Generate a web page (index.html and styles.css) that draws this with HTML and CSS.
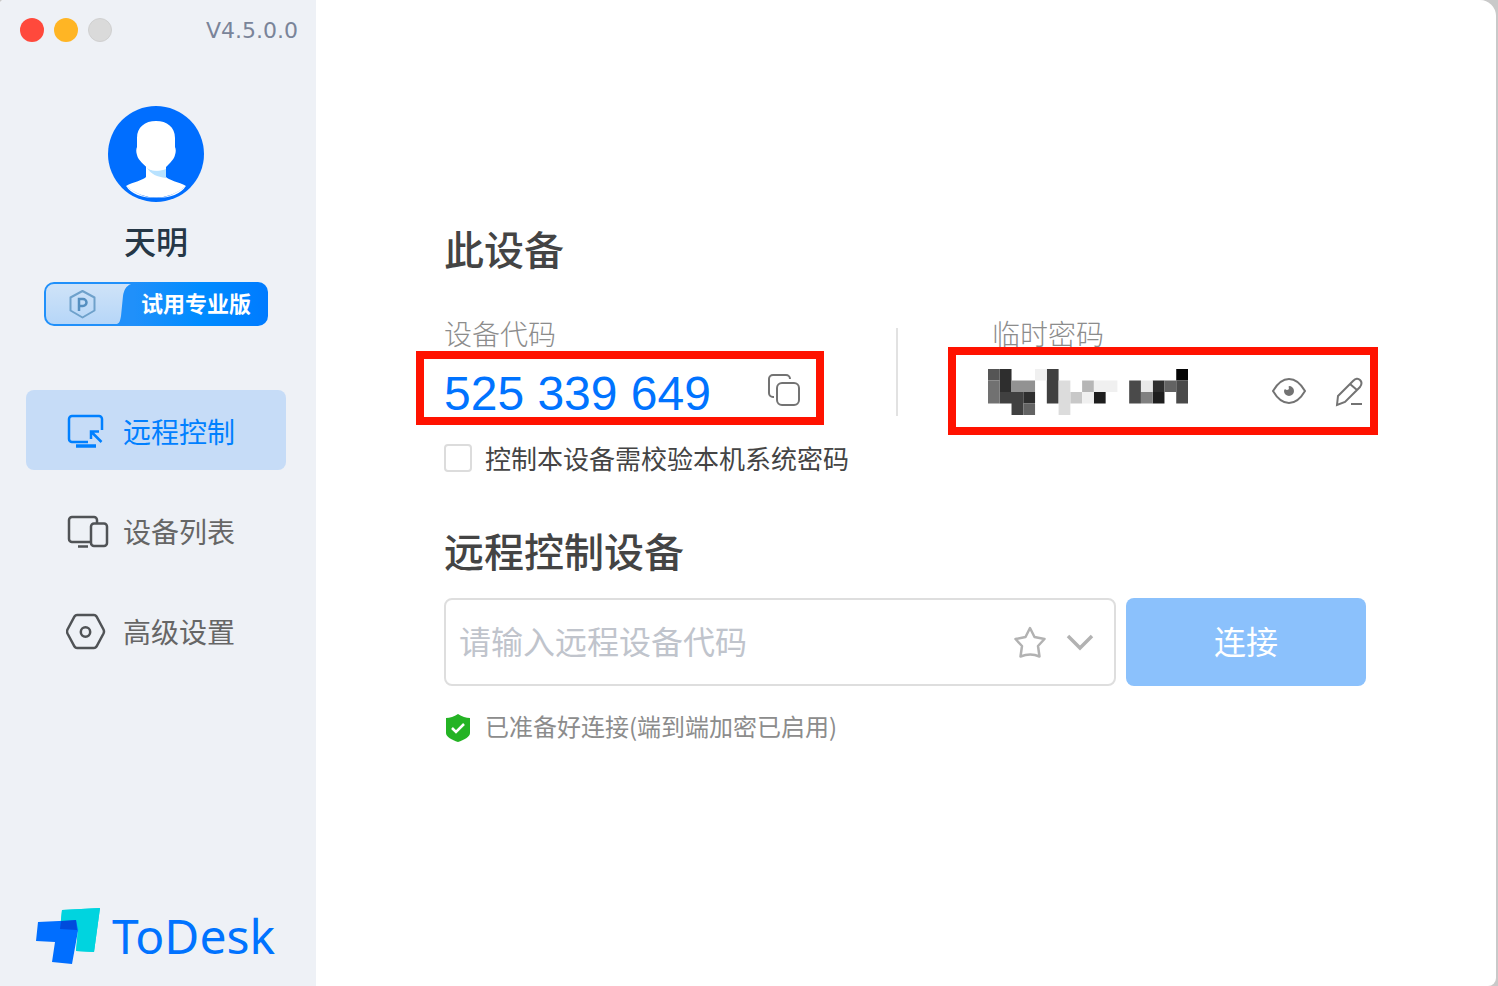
FILE: index.html
```html
<!DOCTYPE html>
<html lang="zh-CN">
<head>
    <meta charset="UTF-8">
    <meta name="viewport" content="width=device-width, initial-scale=1.0">
    <title>ToDesk</title>
    <link rel="stylesheet" href="styles.css">
</head>
<body>
    <div class="window">
        <aside class="sidebar">
            <div class="titlebar">
                <div class="lights">
                    <button class="light close" aria-label="关闭"></button>
                    <button class="light minimize" aria-label="最小化"></button>
                    <button class="light zoom" aria-label="缩放" disabled></button>
                </div>
                <span class="version">V4.5.0.0</span>
            </div>

            <div class="profile">
                <svg class="avatar" viewBox="0 0 96 96" aria-hidden="true">
                    <circle cx="48" cy="48" r="48" fill="#006eff"/>
                    <path d="M38 58h20v13c2 3 13 5 20 9a45 45 0 0 1-60 0c7-4 18-6 20-9z" fill="#fff"/>
                    <path d="M18 80q30 24 60 0-8 12-30 12t-30-12z" fill="#fff"/>
                    <path d="M39 62c6 4 14 3 19 1v9c-9-1-15-4-19-10z" fill="#b8e2ff"/>
                    <path d="M48 15c11 0 19 6 19 17v9c1 2 1 5 0 8-1 5-8 11-11 14-4 2-11 2-15 0-4-3-11-9-12-14-1-3-1-6 0-8v-9c0-11 8-17 19-17z" fill="#fff"/>
                </svg>
                <div class="username">天明</div>
                <button class="badge">
                    <span class="badge-icon">
                        <svg viewBox="0 0 82 44" aria-hidden="true">
                            <defs>
                                <linearGradient id="badgeFill" x1="0" y1="0" x2="0" y2="1">
                                    <stop offset="0" stop-color="#cfe3f8"/>
                                    <stop offset="1" stop-color="#b6d6f8"/>
                                </linearGradient>
                            </defs>
                            <path d="M10 2h77c-5 2-7 6-8 12l-2 20c-1 6-2 8-5 8H10a8 8 0 0 1-8-8V10a8 8 0 0 1 8-8z" fill="url(#badgeFill)"/>
                            <path d="M38.500 9l12 6.500v13l-12 7-12-7v-13z" fill="none" stroke="#6ea1cb" stroke-width="2" stroke-linejoin="round"/>
                            <path d="M35 29V17h4a3.500 3.500 0 0 1 0 7h-4" fill="none" stroke="#558fc0" stroke-width="2.500"/>
                        </svg>
                    </span>
                    <span class="badge-text">试用专业版</span>
                </button>
            </div>

            <nav class="nav">
                <a href="#" class="nav-item active">
                    <svg viewBox="0 0 44 40" aria-hidden="true">
                        <path d="M22 31H6a3 3 0 0 1-3-3V8a3 3 0 0 1 3-3h27a3 3 0 0 1 3 3v11M25 28V20.500h8M25.500 21l10 10"/>
                        <path d="M10 35h20" stroke-width="3.500"/>
                    </svg>
                    远程控制
                </a>
                <a href="#" class="nav-item">
                    <svg viewBox="0 0 44 40" aria-hidden="true">
                        <path d="M24 31H6a3 3 0 0 1-3-3V9a3 3 0 0 1 3-3h22a3 3 0 0 1 3 3v3M12 35.500h10"/>
                        <rect x="25" y="12.500" width="16" height="22.500" rx="3"/>
                    </svg>
                    设备列表
                </a>
                <a href="#" class="nav-item">
                    <svg viewBox="0 0 44 40" aria-hidden="true">
                        <path d="M11 4h17q1.500 0 2.500 1.500l7 13q1 2 0 4l-7 13q-1 1.500-2.500 1.500H11q-1.500 0-2.500-1.500l-7-13q-1-2 0-4l7-13q1-1.500 2.500-1.500z"/>
                        <circle cx="19.500" cy="21" r="4.700"/>
                    </svg>
                    高级设置
                </a>
            </nav>

            <div class="logo">
                <svg viewBox="0 0 64 56" aria-hidden="true">
                    <path d="M26 2L64 0l-6 44-18-1 2-21-18-1z" fill="#00d4df"/>
                    <path d="M2 14l42-2-8 44-20-2 3-20-19-1z" fill="#006eff"/>
                    <path d="M42 22L64 0l-6 44-18-1z" fill="#00d4df"/>
                    <path d="M26 2L64 0 42 22l-2-10-15 1z" fill="#00d4df"/>
                    <path d="M25 13l15-1 1 10-17-1z" fill="#004bdc"/>
                </svg>
                <span>ToDesk</span>
            </div>
        </aside>

        <main class="main">
            <h2>此设备</h2>
            <div class="device">
                <section class="field">
                    <div class="label">设备代码</div>
                    <div class="value code-value">
                        <span class="code">525 339 649</span>
                        <button class="icon-btn" aria-label="复制">
                            <svg viewBox="0 0 32 32" aria-hidden="true">
                                <path d="M6 23H5a4 4 0 0 1-4-4V5a4 4 0 0 1 4-4h13a4 4 0 0 1 4 4"/>
                                <rect x="9" y="9" width="22" height="22" rx="5"/>
                            </svg>
                        </button>
                        <span class="mark"></span>
                    </div>
                </section>
                <div class="divider"></div>
                <section class="field password">
                    <div class="label">临时密码</div>
                    <div class="value">
                        <svg class="mosaic" viewBox="0 0 17 4" preserveAspectRatio="none" aria-hidden="true">
                            <path fill="#050505" d="M16 0h1v1h-1z"/>
                            <path fill="#1e1e1e" d="M9 2h1v1H9zM14 2h1v1h-1z"/>
                            <path fill="#2e2e2e" d="M1 0h1v2H1zM3 2h1v1H3zM14 1h1v1h-1z"/>
                            <path fill="#404040" d="M5 0h1v3H5zM1 2h2v1H1zM2 3h1v1H2z"/>
                            <path fill="#4a4a4a" d="M12 1h1v2h-1zM16 1h1v2h-1z"/>
                            <path fill="#555" d="M0 0h1v1H0z"/>
                            <path fill="#636363" d="M3 3h1v1H3zM15 1h1v1h-1z"/>
                            <path fill="#717171" d="M0 1h1v2H0z"/>
                            <path fill="#808080" d="M13 2h1v1h-1z"/>
                            <path fill="#929292" d="M2 1h2v1H2z"/>
                            <path fill="#b6b6b6" d="M8 1h1v1H8z"/>
                            <path fill="#c8c8c8" d="M7 2h1v1H7z"/>
                            <path fill="#dcdcdc" d="M6 1h1v3H6z"/>
                            <path fill="#e8e8e8" d="M13 1h1v1h-1z"/>
                            <path fill="#f0f0f0" d="M4 0h1v1H4zM8 2h1v1H8zM9 1h2v1H9z"/>
                        </svg>
                        <div class="actions">
                            <button class="icon-btn" aria-label="显示密码">
                                <svg viewBox="0 0 32 32" aria-hidden="true">
                                    <path d="M-1 15Q6 3 15 3t16 12Q24 27 15 27T-1 15z"/>
                                    <path d="M15 10a5 5 0 1 1-5 5q0-1 1-2 1 1 2 1 2 0 2-2-1-1 0-2z" fill="#737373" stroke="none"/>
                                </svg>
                            </button>
                            <button class="icon-btn" aria-label="修改密码">
                                <svg viewBox="0 0 32 32" aria-hidden="true">
                                    <path d="M3 29l1-9L19 5q4-4 7-1t0 7L11 26zM16 8l7 6M17 28h11"/>
                                </svg>
                            </button>
                        </div>
                        <span class="mark"></span>
                    </div>
                </section>
            </div>

            <label class="check">
                <input type="checkbox">
                控制本设备需校验本机系统密码
            </label>

            <h2 class="remote-title">远程控制设备</h2>
            <form class="connect">
                <div class="input-box">
                    <input type="text" placeholder="请输入远程设备代码" aria-label="远程设备代码">
                    <button type="button" class="icon-btn" aria-label="收藏">
                        <svg viewBox="0 0 32 32" aria-hidden="true">
                            <path d="M16 2l4.500 9 10 2-6.500 7 1.500 10.500q-9-4-19 0L8 20l-6.500-7 10-2z" stroke-width="2.500" stroke-linejoin="round"/>
                        </svg>
                    </button>
                    <button type="button" class="icon-btn" aria-label="历史记录">
                        <svg viewBox="0 0 32 32" aria-hidden="true">
                            <path d="M4 10l12 12 12-12" stroke-width="3.500"/>
                        </svg>
                    </button>
                </div>
                <button type="button" class="connect-btn">连接</button>
            </form>

            <div class="status">
                <svg viewBox="0 0 28 28" aria-hidden="true">
                    <path d="M14 0q6 4 12 4v15c0 4-6 7-12 9-6-2-12-5-12-9V4q6 0 12-4z" fill="#24b324"/>
                    <path d="M8 14l4 4 8-8" fill="none" stroke="#fff" stroke-width="2.500"/>
                </svg>
                <span>已准备好连接(端到端加密已启用)</span>
            </div>
        </main>
    </div>
</body>
</html>
```
FILE: styles.css
```css
* {
    margin: 0;
    padding: 0;
    box-sizing: border-box;
}

body {
    font-family: "Noto Sans CJK SC", sans-serif;
    background: #c9c9c9;
    color: #444;
}

button {
    border: none;
    background: none;
    font-family: inherit;
    cursor: pointer;
}

svg {
    display: block;
    flex-shrink: 0;
}

.window {
    display: flex;
    min-height: 100vh;
    margin-right: 2px;
    background: #fff;
    border-radius: 4px 16px 8px 0;
    overflow: hidden;
}

/* Sidebar */
.sidebar {
    display: flex;
    flex-direction: column;
    flex: 0 0 316px;
    background: #eef1f6;
}

.titlebar {
    display: flex;
    align-items: center;
    justify-content: space-between;
    height: 60px;
    padding: 0 18px 0 20px;
}

.lights {
    display: flex;
    gap: 10px;
}

.light {
    width: 24px;
    height: 24px;
    border-radius: 50%;
}

.close {
    background: #ff493c;
}

.minimize {
    background: #ffb524;
}

.zoom {
    background: #dadada;
    border: 1px solid #d0d0d0;
}

.version {
    font-family: "DejaVu Sans", sans-serif;
    font-size: 22px;
    color: #7a8499;
}

.profile {
    display: flex;
    flex-direction: column;
    align-items: center;
    padding: 46px 4px 0 0;
}

.avatar {
    width: 96px;
    height: 96px;
}

.username {
    margin-top: 16px;
    padding-bottom: 4px;
    font-size: 32px;
    font-weight: 500;
    line-height: 44px;
    color: #253746;
}

.badge {
    display: flex;
    align-items: center;
    width: 224px;
    height: 44px;
    margin-top: 16px;
    border-radius: 10px;
    background: linear-gradient(90deg, #2090fa 40%, #008cff 70%, #007bff);
    overflow: hidden;
}

.badge-icon svg {
    width: 82px;
    height: 44px;
    overflow: visible;
}

.badge-text {
    padding: 0 0 4px 15px;
    font-size: 22px;
    font-weight: 700;
    color: #fff;
}

.nav {
    display: flex;
    flex-direction: column;
    gap: 20px;
    padding: 64px 30px 0 26px;
}

.nav-item {
    display: flex;
    align-items: center;
    gap: 13px;
    height: 80px;
    padding: 2px 0 0 40px;
    border-radius: 8px;
    font-size: 28px;
    color: #666;
    text-decoration: none;
}

.nav-item svg {
    width: 44px;
    height: 40px;
    fill: none;
    stroke: #505356;
    stroke-width: 2.5;
}

.nav-item.active {
    background: #c6dcf7;
    color: #0080ff;
}

.nav-item.active svg {
    stroke: #0080ff;
}

.logo {
    display: flex;
    align-items: center;
    gap: 12px;
    margin-top: auto;
    padding: 0 0 22px 36px;
    font-family: "Noto Sans", sans-serif;
    font-size: 48px;
    line-height: 56px;
    color: #0073ff;
}

.logo svg {
    width: 64px;
    height: 56px;
}

/* Main panel */
.main {
    display: flex;
    flex-direction: column;
    justify-content: center;
    flex: 1;
    min-width: 0;
    padding: 0 130px 16px 128px;
}

h2 {
    padding-bottom: 4px;
    font-size: 40px;
    font-weight: 500;
    line-height: 44px;
}

.device {
    display: grid;
    grid-template-columns: minmax(0, 452fr) 2px minmax(0, 468fr);
    margin-top: 44px;
}

.field {
    padding-right: 96px;
}

.label {
    padding-bottom: 2px;
    font-size: 28px;
    font-weight: 300;
    line-height: 30px;
    color: #8c8c8c;
}

.value {
    position: relative;
    display: flex;
    align-items: center;
    justify-content: space-between;
    height: 48px;
    margin-top: 18px;
}

.code-value {
    align-items: flex-start;
    padding-top: 6px;
}

.code {
    font-family: "Liberation Sans", Arial, sans-serif;
    font-size: 48px;
    line-height: 40px;
    color: #0073ff;
    white-space: nowrap;
}

.divider {
    margin-top: 10px;
    background: #e2e2e2;
}

.password {
    padding: 0 0 0 90px;
}

.password .label {
    padding-left: 4px;
}

.mosaic {
    width: 200px;
    height: 46px;
}

.actions {
    display: flex;
    gap: 28px;
}

.icon-btn svg {
    width: 32px;
    height: 32px;
    fill: none;
    stroke: #737373;
    stroke-width: 2;
    overflow: visible;
}

/* Red highlight frame around a value */
.mark {
    position: absolute;
    inset: -21px -12px -19px -40px;
    border: 8px solid #ff1200;
    pointer-events: none;
}

.code-value .mark {
    inset: -17px -24px -9px -28px;
}

.check {
    display: flex;
    align-items: center;
    gap: 13px;
    margin-top: 26px;
    font-size: 26px;
    line-height: 32px;
}

.check input {
    appearance: none;
    width: 28px;
    height: 28px;
    border: 2px solid #dcdcdc;
    border-radius: 4px;
}

.check input:checked {
    background: #0080ff;
}

.remote-title {
    margin-top: 54px;
}

.connect {
    display: flex;
    gap: 10px;
    height: 88px;
    margin-top: 22px;
}

.input-box {
    display: flex;
    align-items: center;
    gap: 18px;
    flex: 1;
    min-width: 0;
    padding: 0 18px 0 13px;
    border: 2px solid #dedede;
    border-radius: 8px;
}

.input-box input {
    flex: 1;
    min-width: 0;
    padding-bottom: 4px;
    border: none;
    outline: none;
    font-family: inherit;
    font-size: 32px;
    color: #444;
}

.input-box input::placeholder {
    color: #c0c4cc;
}

.input-box svg {
    stroke: #b2b2b2;
}

.connect-btn {
    width: 240px;
    padding-bottom: 4px;
    border-radius: 8px;
    background: #8bc1fc;
    color: #fff;
    font-size: 32px;
}

.status {
    display: flex;
    align-items: center;
    gap: 13px;
    margin-top: 26px;
    font-size: 24px;
    line-height: 28px;
    color: #8c8c8c;
}

.status span {
    padding-bottom: 4px;
}

.status svg {
    width: 28px;
    height: 28px;
}
```
